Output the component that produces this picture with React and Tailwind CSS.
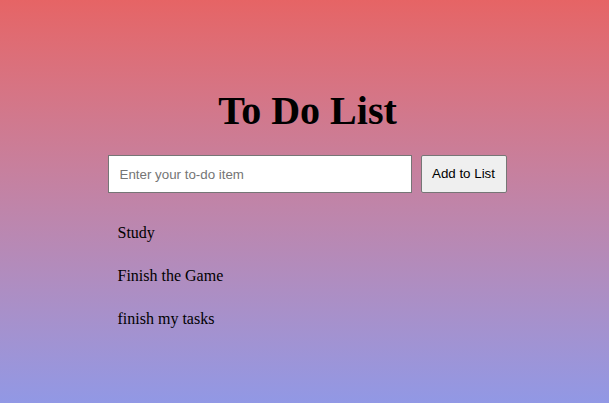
import React, { useState } from 'react';

const initialItems = ['Study', 'Finish the Game', 'finish my tasks'];

export default function App() {
  const [items, setItems] = useState(initialItems);
  const [text, setText] = useState('');

  const addItem = () => {
    if (!text.trim()) return;
    setItems([...items, text]);
    setText('');
  };

  return (
    <div
      className="min-h-[403px] w-full bg-gradient-to-b from-[#e66465] to-[#9198e5] pl-[6px]"
      style={{ fontFamily: '"Liberation Serif", "Times New Roman", serif' }}
    >
      <div className="mx-auto flex w-[400px] flex-col pt-[88px]">
        <h1 className="text-center text-[40px] font-bold leading-[46px] text-black">
          To Do List
        </h1>

        <div className="mt-[21px] flex h-[38px] gap-[9px]">
          <input
            type="text"
            value={text}
            onChange={(e) => setText(e.target.value)}
            placeholder="Enter your to-do item"
            className="h-[38px] w-[304px] border border-[#767676] bg-white px-[11px] text-[13.33px] text-black outline-none placeholder:text-[#757575]"
            style={{ fontFamily: '"Liberation Sans", Arial, sans-serif' }}
          />
          <button
            onClick={addItem}
            className="h-[38px] w-[86px] rounded-[2px] border border-[#767676] bg-[#efefef] text-[13.33px] text-black"
            style={{ fontFamily: '"Liberation Sans", Arial, sans-serif' }}
          >
            Add to List
          </button>
        </div>

        <ul className="mt-[31px] pl-[10px]">
          {items.map((item, i) => (
            <li key={i} className="h-[43px] text-[16px] leading-[18px] text-black">
              {item}
            </li>
          ))}
        </ul>
      </div>
    </div>
  );
}
